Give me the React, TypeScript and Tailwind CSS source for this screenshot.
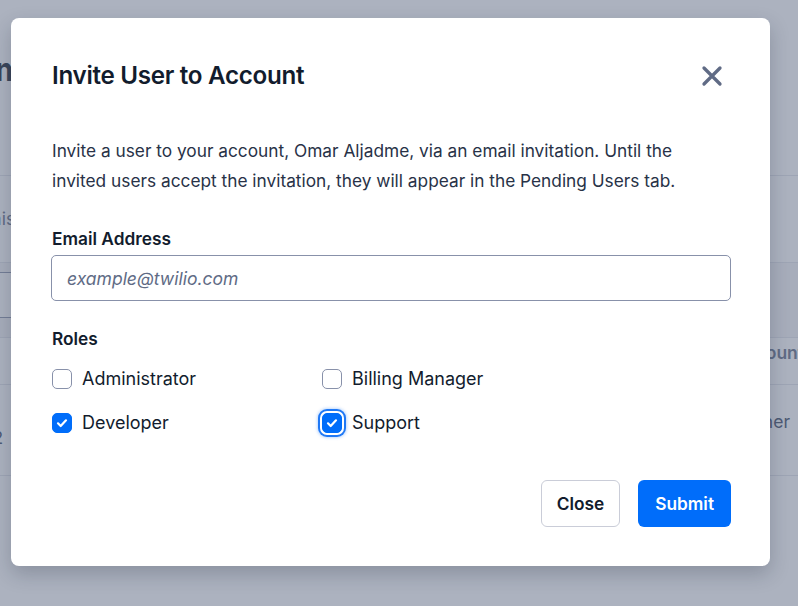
import { useState } from "react";

const font = { fontFamily: "Inter, 'Noto Sans', sans-serif" };

type Role = { id: string; label: string };

const roles: Role[] = [
  { id: "admin", label: "Administrator" },
  { id: "billing", label: "Billing Manager" },
  { id: "developer", label: "Developer" },
  { id: "support", label: "Support" },
];

// Checkbox styled like the Paste one
const RoleCheckbox = ({
  role,
  checked,
  focused,
  onToggle,
}: {
  role: Role;
  checked: boolean;
  focused: boolean;
  onToggle: () => void;
}) => (
  <label className="flex items-center gap-[10px] h-[25px] cursor-pointer select-none" onClick={onToggle}>
    <span
      className={
        checked
          ? focused
            ? "flex items-center justify-center w-[20px] h-[20px] rounded-[5px] bg-[#006dfa] border border-[#006dfa] shadow-[0_0_0_2px_#ffffff,0_0_0_4px_#1f78f5,0_0_3px_5px_rgba(0,109,250,0.25)]"
            : "flex items-center justify-center w-[20px] h-[20px] rounded-[5px] bg-[#006dfa] border border-[#006dfa]"
          : "flex items-center justify-center w-[20px] h-[20px] rounded-[5px] bg-white border border-[#8891aa]"
      }
    >
      {checked && (
        <svg width="14" height="14" viewBox="0 0 14 14" fill="none" aria-hidden="true">
          <path d="M3 7.3 L5.7 10 L11 4.3" stroke="#ffffff" strokeWidth="2.2" strokeLinecap="round" strokeLinejoin="round" />
        </svg>
      )}
    </span>
    <span className="text-[18px] leading-[25px] text-[#121c2d]">{role.label}</span>
  </label>
);

// The page that sits behind the overlay
const BackgroundPage = () => (
  <div className="w-[798px] h-[606px] bg-white overflow-hidden text-[#121c2d]">
    <div className="h-[176px] border-b border-[#e1e3ea] pt-[46px]">
      <h1 className="ml-[-62px] text-[32px] leading-[48px] font-bold text-[#121c2d]">Team members</h1>
    </div>
    <div className="h-[87px] border-b border-[#e1e3ea] flex items-center">
      <p className="ml-[-20px] text-[17.5px] text-[#606b85]">This list shows every user on the account.</p>
    </div>
    <div className="h-[75px] border-b border-[#e1e3ea] pt-[9px] bg-[#f4f4f6]">
      <div className="ml-[-200px] w-[300px] h-[46px] border border-[#8891aa] rounded-[5px] bg-white flex items-center px-[16px]">
        <span className="italic text-[17.5px] text-[#606b85]">Search for a user</span>
      </div>
    </div>
    <div className="h-[47px] border-b border-[#e1e3ea] flex justify-end items-start pt-[2px]">
      <span className="mr-[-6px] text-[17.5px] font-semibold text-[#606b85]">Account</span>
    </div>
    <div className="h-[91px] border-b border-[#e1e3ea] flex justify-between items-start">
      <span className="ml-[-40px] mt-[40px] text-[17.5px] text-[#394762]">2022</span>
      <span className="mr-[8px] mt-[24px] text-[17.5px] text-[#394762]">Owner</span>
    </div>
  </div>
);

const CloseIcon = () => (
  <svg width="22" height="22" viewBox="0 0 22 22" fill="none" aria-hidden="true">
    <path d="M3 3 L19 19 M19 3 L3 19" stroke="#606b85" strokeWidth="3.3" strokeLinecap="round" />
  </svg>
);

const App = () => {
  const [checked, setChecked] = useState<Record<string, boolean>>({
    admin: false,
    billing: false,
    developer: true,
    support: true,
  });

  const toggle = (id: string) => setChecked((prev) => ({ ...prev, [id]: !prev[id] }));

  return (
    <div className="relative w-[798px] h-[606px] overflow-hidden" style={font}>
      <BackgroundPage />

      {/* overlay + modal */}
      <div className="absolute inset-0 bg-[rgba(96,107,133,0.52)] pt-[18px] pl-[11px]">
        <div className="w-[759px] h-[548px] bg-white rounded-[8px] shadow-[0_8px_20px_rgba(18,28,45,0.22)] pl-[40px] pr-[39px] pt-[40px] pb-[39px] flex flex-col">
          <div className="flex items-center justify-between pl-[1px]">
            <h2 className="text-[24.2px] leading-[35px] font-semibold text-[#121c2d] tracking-[-0.3px]">
              Invite User to Account
            </h2>
            <button className="mr-[7px] p-[1px]" aria-label="Close">
              <CloseIcon />
            </button>
          </div>

          <p className="mt-[43px] pl-[1px] text-[17.3px] leading-[30px] text-[#283247]">
            Invite a user to your account, Omar Aljadme, via an email invitation. Until the invited users accept the
            invitation, they will appear in the Pending Users tab.
          </p>

          <label className="mt-[30px] pl-[1px] text-[17.3px] leading-[25px] font-semibold text-[#121c2d]">Email Address</label>
          <input
            type="email"
            placeholder="example@twilio.com"
            className="mt-[4px] w-full h-[46px] border border-[#8891aa] rounded-[5px] px-[15px] text-[17.5px] text-[#121c2d] placeholder:italic placeholder:text-[#606b85] outline-none"
          />

          <div className="mt-[25px] pl-[1px] text-[17.3px] leading-[25px] font-semibold text-[#121c2d]">Roles</div>
          <div className="mt-[15px] pl-[1px] grid grid-cols-[270px_1fr] gap-y-[19px]">
            {roles.map((r) => (
              <RoleCheckbox
                key={r.id}
                role={r}
                checked={checked[r.id]}
                focused={r.id === "support"}
                onToggle={() => toggle(r.id)}
              />
            ))}
          </div>

          <div className="mt-auto flex justify-end gap-[18px]">
            <button className="h-[47px] px-[15px] rounded-[6px] border border-[#cacdd8] bg-white text-[17.3px] font-semibold text-[#121c2d]">
              Close
            </button>
            <button className="h-[47px] px-[17px] rounded-[6px] bg-[#006dfa] text-[17.3px] font-semibold text-white">
              Submit
            </button>
          </div>
        </div>
      </div>
    </div>
  );
};

export default App;
